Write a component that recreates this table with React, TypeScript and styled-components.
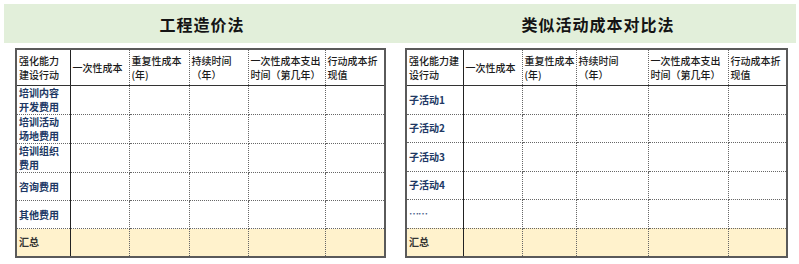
import React from "react";
import styled, { createGlobalStyle } from "styled-components";

const GlobalStyle = createGlobalStyle`
  html, body {
    margin: 0;
    padding: 0;
    background: #ffffff;
    font-family: "Noto Sans CJK SC", "Liberation Sans", sans-serif;
  }
`;

const Page = styled.div`
  width: 799px;
  height: 264px;
  padding: 4px 3px 0 4px;
  box-sizing: border-box;
  overflow: hidden;
`;

const Band = styled.div`
  display: grid;
  grid-template-columns: 396px 396px;
  height: 39px;
  background: #e2efda;
`;

const Title = styled.h2`
  margin: 0;
  display: flex;
  align-items: center;
  justify-content: center;
  font-size: 16px;
  font-weight: 700;
  letter-spacing: 1px;
  color: #141414;
`;

const Panels = styled.div`
  display: grid;
  grid-template-columns: 396px 396px;
  margin-top: 5px;
`;

interface ISheet {
  offset: number;
  width: number;
}
const Sheet = styled.table<ISheet>`
  margin-left: ${props => props.offset}px;
  width: ${props => props.width}px;
  border-collapse: collapse;
  table-layout: fixed;
  border: 2px solid #5a5a5a;
  font-size: 10px;
  line-height: 14px;
`;

const HeadCell = styled.th`
  height: 35px;
  padding: 0 2px;
  text-align: left;
  vertical-align: middle;
  font-weight: 500;
  color: #1a1a1a;
  white-space: nowrap;
  border-bottom: 1px solid #333;
  border-right: 1px dotted #666;

  &:first-child {
    border-right: 1px solid #222;
  }
`;

interface IRow {
  total?: boolean;
}
const Row = styled.tr<IRow>`
  height: 28px;
  background: ${props => (props.total ? "#fff2cc" : "#ffffff")};
`;

interface ICell {
  total?: boolean;
}
const LabelCell = styled.td<ICell>`
  padding: 0 2px;
  vertical-align: middle;
  font-weight: 700;
  color: ${props => (props.total ? "#333333" : "#203864")};
  border-right: 1px solid #222;
  border-bottom: 1px dotted #666;
  white-space: nowrap;
`;

const Cell = styled.td`
  border-right: 1px dotted #666;
  border-bottom: 1px dotted #666;
`;

const Dots = styled.span`
  color: #4a5f8a;
  letter-spacing: -1px;
`;

interface ISheetData {
  title: string;
  offset: number;
  widths: number[];
  headers: React.ReactNode[];
  rows: React.ReactNode[];
}

const sheets: ISheetData[] = [
  {
    title: "工程造价法",
    offset: 11,
    widths: [54, 59, 60, 59, 77, 60],
    headers: [
      <>强化能力<br />建设行动</>,
      "一次性成本",
      <>重复性成本<br />(年)</>,
      <>持续时间<br />（年）</>,
      <>一次性成本支出<br />时间（第几年）</>,
      <>行动成本折<br />现值</>
    ],
    rows: [
      <>培训内容<br />开发费用</>,
      <>培训活动<br />场地费用</>,
      <>培训组织<br />费用</>,
      "咨询费用",
      "其他费用"
    ]
  },
  {
    title: "类似活动成本对比法",
    offset: 5,
    widths: [57, 59, 54, 72, 80, 59],
    headers: [
      <>强化能力建<br />设行动</>,
      "一次性成本",
      <>重复性成本<br />(年)</>,
      <>持续时间<br />（年）</>,
      <>一次性成本支出<br />时间（第几年）</>,
      <>行动成本折<br />现值</>
    ],
    rows: ["子活动1", "子活动2", "子活动3", "子活动4", <Dots>……</Dots>]
  }
];

const CostSheet = ({ data }: { data: ISheetData }) => {
  const width = data.widths.reduce((a, b) => a + b, 0);
  return (
    <Sheet offset={data.offset} width={width}>
      <colgroup>
        {data.widths.map((w, i) => (
          <col key={i} style={{ width: w }} />
        ))}
      </colgroup>
      <thead>
        <tr>
          {data.headers.map((h, i) => (
            <HeadCell key={i}>{h}</HeadCell>
          ))}
        </tr>
      </thead>
      <tbody>
        {data.rows.map((r, i) => (
          <Row key={i}>
            <LabelCell>{r}</LabelCell>
            {data.widths.slice(1).map((_, j) => (
              <Cell key={j} />
            ))}
          </Row>
        ))}
        <Row total>
          <LabelCell total>汇总</LabelCell>
          {data.widths.slice(1).map((_, j) => (
            <Cell key={j} />
          ))}
        </Row>
      </tbody>
    </Sheet>
  );
};

const App = () => {
  return (
    <Page>
      <GlobalStyle />
      <Band>
        {sheets.map(s => (
          <Title key={s.title}>{s.title}</Title>
        ))}
      </Band>
      <Panels>
        {sheets.map(s => (
          <CostSheet key={s.title} data={s} />
        ))}
      </Panels>
    </Page>
  );
};

export default App;
